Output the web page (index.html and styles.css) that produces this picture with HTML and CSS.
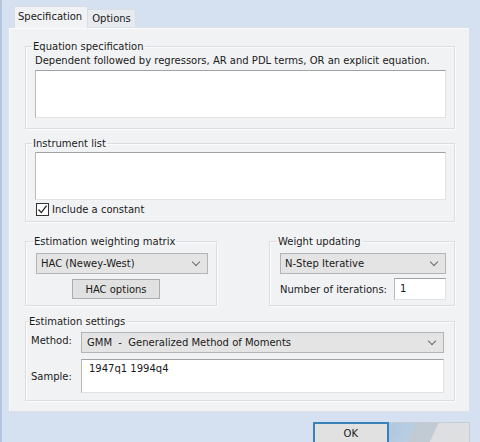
FILE: index.html
```html
<!DOCTYPE html>
<html lang="en">
<head>
    <meta charset="UTF-8">
    <title>Equation Estimation</title>
    <link rel="stylesheet" href="styles.css">
</head>
<body>
    <div class="dialog">
        <div class="tabs">
            <div class="tab active">Specification</div>
            <div class="tab">Options</div>
        </div>
        <div class="panel">
            <fieldset class="group">
                <legend>Equation specification</legend>
                <div class="hint">Dependent followed by regressors, AR and PDL terms, OR an explicit equation.</div>
                <div class="textbox tall"></div>
            </fieldset>

            <fieldset class="group instruments">
                <legend>Instrument list</legend>
                <div class="textbox tall"></div>
                <label class="check">
                    <span class="box">
                        <svg width="11" height="11" viewBox="0 0 11 11"><path d="M1.5 5.5 L4.3 8.6 L9.6 1.6" fill="none" stroke="#222" stroke-width="1.3"/></svg>
                    </span>
                    Include a constant
                </label>
            </fieldset>

            <div class="split">
                <fieldset class="group weighting">
                    <legend>Estimation weighting matrix</legend>
                    <div class="combo"><span>HAC (Newey-West)</span><span class="chev"></span></div>
                    <div class="button hac">HAC options</div>
                </fieldset>
                <fieldset class="group updating">
                    <legend>Weight updating</legend>
                    <div class="combo"><span>N-Step Iterative</span><span class="chev"></span></div>
                    <div class="iter-row">
                        <span>Number of iterations:</span>
                        <div class="textbox small">1</div>
                    </div>
                </fieldset>
            </div>

            <fieldset class="group settings">
                <legend>Estimation settings</legend>
                <div class="row">
                    <span class="label">Method:</span>
                    <div class="combo wide"><span>GMM &nbsp;- &nbsp;Generalized Method of Moments</span><span class="chev"></span></div>
                </div>
                <div class="row sample-row">
                    <span class="label">Sample:</span>
                    <div class="textbox sample">1947q1 1994q4</div>
                </div>
            </fieldset>
        </div>
        <div class="footer">
            <div class="button ok">OK</div>
            <div class="ghost"></div>
        </div>
    </div>
</body>
</html>
```

FILE: styles.css
```css
html, body {
    margin: 0;
    padding: 0;
}
body {
    width: 480px;
    height: 442px;
    overflow: hidden;
    background-color: #d5e1f1;
    font-family: "DejaVu Sans", Tahoma, sans-serif;
    font-size: 10px;
    color: #1a1a1a;
}
.dialog {
    height: 442px;
    border-left: 2px solid #b4c6de;
    box-sizing: border-box;
    padding: 6px 10px 0 6px;
}
.tabs {
    display: flex;
    align-items: flex-end;
    padding-left: 6px;
    height: 21px;
}
.tab {
    height: 17px;
    line-height: 17px;
    padding: 0 4px 0 4px;
    background-color: #e7ebf0;
    border: 1px solid #d9dee5;
    border-bottom: none;
    border-left: none;
}
.tab.active {
    height: 21px;
    line-height: 19px;
    padding: 0 5px 0 3px;
    background-color: #f1f2f4;
    border-left: 1px solid #d9dee5;
    position: relative;
    top: 1px;
}
.panel {
    height: 371px;
    background-color: #f1f2f4;
    border: 1px solid #dce1e7;
    box-shadow: inset 1px 1px #fbfbfc;
    padding: 12px 14px 0 16px;
}
.group {
    margin: 0;
    border: 1px solid #dadde2;
    box-shadow: 1px 1px #fbfbfc, inset 1px 1px #fbfbfc;
    padding: 0 8px 10px 9px;
    min-width: 0;
}
.group legend {
    padding: 0 1px;
    margin-left: -3px;
    line-height: 13px;
}
.hint {
    line-height: 13px;
    margin-top: 1px;
}
.textbox {
    background-color: #fff;
    border: 1px solid #e2e2e2;
    border-top-color: #a2a2a2;
    border-left-color: #b9b9b9;
    box-sizing: border-box;
}
.textbox.tall {
    height: 48px;
    margin-top: 3px;
}
.instruments {
    margin-top: 8px;
    padding-bottom: 4px;
}
.instruments .textbox.tall {
    margin-top: 2px;
}
.check {
    display: flex;
    align-items: center;
    gap: 3px;
    margin-top: 2px;
    margin-left: 1px;
    height: 15px;
}
.box {
    width: 13px;
    height: 13px;
    border: 1px solid #333;
    box-sizing: border-box;
    background-color: #fff;
    display: flex;
    align-items: center;
    justify-content: center;
}
.split {
    display: flex;
    justify-content: space-between;
    margin-top: 13px;
}
.weighting {
    width: 192px;
    box-sizing: border-box;
    padding: 0 8px 6px 10px;
}
.updating {
    width: 186px;
    box-sizing: border-box;
    padding: 0 8px 4px 10px;
}
.combo {
    display: flex;
    align-items: center;
    justify-content: space-between;
    height: 21px;
    box-sizing: border-box;
    background-color: #e4e4e4;
    border: 1px solid #b4b4b4;
    padding: 0 8px 0 4px;
    margin-top: 5px;
}
.chev {
    width: 5px;
    height: 5px;
    border-right: 1px solid #6a6a6a;
    border-bottom: 1px solid #6a6a6a;
    transform: rotate(45deg);
    margin-top: -3px;
}
.button {
    display: flex;
    align-items: center;
    justify-content: center;
    background-color: #e1e1e1;
    border: 1px solid #adadad;
    box-sizing: border-box;
}
.button.hac {
    width: 88px;
    height: 20px;
    margin: 5px 0 0 36px;
}
.iter-row {
    display: flex;
    align-items: center;
    justify-content: space-between;
    margin-top: 4px;
}
.textbox.small {
    width: 52px;
    height: 22px;
    padding: 4px 0 0 5px;
}
.settings {
    margin-top: 9px;
    padding: 0 10px 7px 5px;
}
.row {
    display: flex;
    align-items: center;
}
.row .label {
    width: 50px;
    flex-shrink: 0;
}
.combo.wide {
    flex: 1;
    margin-top: 4px;
    padding-left: 5px;
}
.sample-row {
    margin-top: 6px;
}
.textbox.sample {
    flex: 1;
    height: 34px;
    padding: 3px 0 0 7px;
}
.footer {
    display: flex;
    padding-left: 305px;
    margin-top: 10px;
}
.button.ok {
    width: 76px;
    height: 21px;
    border: 2px solid #3a80bb;
    border-bottom: none;
}
.ghost {
    width: 82px;
    height: 21px;
    border-top: 1px solid #c5ccd3;
    border-right: 1px solid #c5ccd3;
    box-sizing: border-box;
    background: linear-gradient(115deg, #aec8e0 0%, #b9cee2 30%, #c0cad2 31%, #c2cbd3 55%, #dcdee1 56%, #dfe0e2 100%);
}
```
